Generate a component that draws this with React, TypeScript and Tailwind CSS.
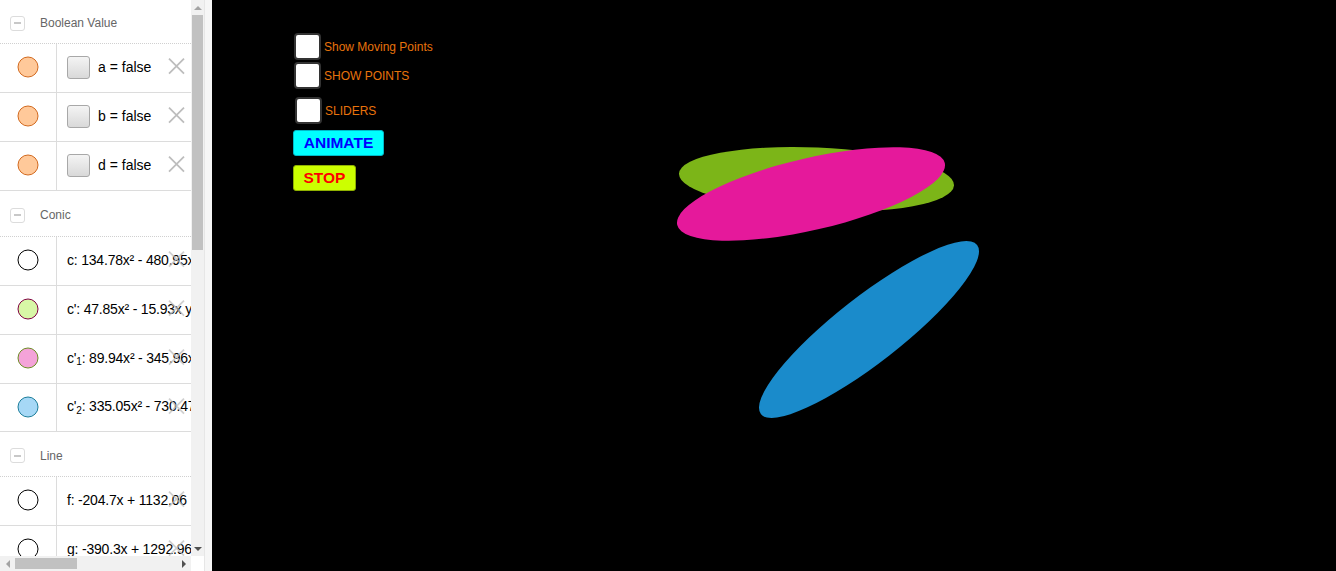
import React from "react";

const font = { fontFamily: '"Liberation Sans", Arial, sans-serif' };

function Collapse() {
  return (
    <div className="w-[15px] h-[15px] rounded-[3px] border border-[#dcdcdc] flex items-center justify-center">
      <div className="w-[7px] h-[2px] bg-[#c8c8c8]" />
    </div>
  );
}

function Header({ label, h }: { label: string; h: string }) {
  return (
    <div className={`flex items-center pt-[3px] border-b border-dotted border-[#d0d0d0] ${h}`}>
      <div className="w-[40px] pl-[10px] flex items-center">
        <Collapse />
      </div>
      <span className="text-[12px] text-[#666]">{label}</span>
    </div>
  );
}

function XIcon({ faint }: { faint?: boolean }) {
  return (
    <svg
      width="19"
      height="19"
      viewBox="0 0 19 19"
      className={`absolute left-[167px] top-1/2 -translate-y-[60%] ${faint ? "opacity-70" : ""}`}
    >
      <path d="M2 2 L17 17 M17 2 L2 17" stroke="#bdbdbd" strokeWidth="1.8" fill="none" />
    </svg>
  );
}

function Marble({ fill, stroke }: { fill: string; stroke: string }) {
  return (
    <svg width="22" height="22" viewBox="0 0 22 22">
      <circle cx="11" cy="11" r="10" fill={fill} stroke={stroke} strokeWidth="1" />
    </svg>
  );
}

function Row({
  fill,
  stroke,
  h = "h-[49px]",
  children,
  faint,
}: {
  fill: string;
  stroke: string;
  h?: string;
  children: React.ReactNode;
  faint?: boolean;
}) {
  return (
    <div className={`relative flex border-b border-[#dcdcdc] ${h}`}>
      <div className="w-[57px] shrink-0 border-r border-[#dcdcdc] flex items-center justify-center pr-[1px] pb-[2px]">
        <Marble fill={fill} stroke={stroke} />
      </div>
      <div className="flex-1 flex items-center pl-[10px] pb-[2px] whitespace-nowrap overflow-hidden text-[14px] text-black">
        {children}
      </div>
      <XIcon faint={faint} />
    </div>
  );
}

function BoolRow({ name }: { name: string }) {
  return (
    <Row fill="#ffc99a" stroke="#d2691e">
      <div className="w-[23px] h-[23px] rounded-[3px] border border-[#a8a8a8] bg-gradient-to-b from-[#f4f4f4] to-[#d9d9d9] mr-[8px]" />
      <span>{name} = false</span>
    </Row>
  );
}

function Prime({ base, sub }: { base: string; sub?: string }) {
  return (
    <span>
      {base}'{sub ? <sub className="text-[10px]">{sub}</sub> : null}
    </span>
  );
}

export default function App() {
  return (
    <div className="w-[1336px] h-[571px] flex overflow-hidden bg-white" style={font}>
      {/* Sidebar */}
      <div className="w-[204px] h-full flex flex-col shrink-0">
        <div className="flex flex-1 min-h-0">
          <div className="w-[191px] overflow-hidden">
            <Header label="Boolean Value" h="h-[44px]" />
            <BoolRow name="a" />
            <BoolRow name="b" />
            <BoolRow name="d" />
            <Header label="Conic" h="h-[46px]" />
            <Row fill="#ffffff" stroke="#000000" faint>
              <span className="tracking-[-0.2px]">c: 134.78x² - 480.95x + 53.73xy + 21.09y²</span>
            </Row>
            <Row fill="#d8f7a6" stroke="#800040" faint>
              <span className="tracking-[-0.2px]">
                <Prime base="c" />: 47.85x² - 15.93x y + 11.2y²
              </span>
            </Row>
            <Row fill="#f4a3d9" stroke="#6b8e23" faint>
              <span className="tracking-[-0.2px]">
                <Prime base="c" sub="1" />: 89.94x² - 345.96x + 12y²
              </span>
            </Row>
            <Row fill="#a6d8f6" stroke="#1b7d9a" h="h-[48px]" faint>
              <span className="tracking-[-0.2px]">
                <Prime base="c" sub="2" />: 335.05x² - 730.47x + 20y²
              </span>
            </Row>
            <Header label="Line" h="h-[45px]" />
            <Row fill="#ffffff" stroke="#000000" faint>
              <span className="tracking-[-0.2px]">f: -204.7x + 1132.06</span>
            </Row>
            <Row fill="#ffffff" stroke="#000000" faint>
              <span className="tracking-[-0.2px]">g: -390.3x + 1292.96</span>
            </Row>
          </div>
          {/* vertical scrollbar */}
          <div className="w-[13px] bg-[#f1f1f1] flex flex-col items-center">
            <div className="h-[15px] flex items-center justify-center">
              <div className="w-0 h-0 border-l-[4px] border-r-[4px] border-b-[4px] border-l-transparent border-r-transparent border-b-[#a3a3a3]" />
            </div>
            <div className="w-[11px] h-[235px] bg-[#c1c1c1]" />
            <div className="flex-1" />
            <div className="h-[15px] flex items-center justify-center">
              <div className="w-0 h-0 border-l-[4px] border-r-[4px] border-t-[4px] border-l-transparent border-r-transparent border-t-[#505050]" />
            </div>
          </div>
        </div>
        {/* horizontal scrollbar */}
        <div className="h-[15px] flex shrink-0">
          <div className="w-[191px] bg-[#f1f1f1] flex items-center">
            <div className="w-[15px] flex items-center justify-center">
              <div className="w-0 h-0 border-t-[4px] border-b-[4px] border-r-[4px] border-t-transparent border-b-transparent border-r-[#a3a3a3]" />
            </div>
            <div className="w-[62px] h-[11px] bg-[#c1c1c1]" />
            <div className="flex-1" />
            <div className="w-[15px] flex items-center justify-center">
              <div className="w-0 h-0 border-t-[4px] border-b-[4px] border-l-[4px] border-t-transparent border-b-transparent border-l-[#505050]" />
            </div>
          </div>
          <div className="flex-1 bg-white" />
        </div>
      </div>
      {/* divider */}
      <div className="w-[8px] h-full bg-[#f6f6f6] border-l border-[#e6e6e6] shrink-0" />
      {/* canvas */}
      <div className="flex-1 h-full bg-black relative overflow-hidden">
        <svg className="absolute inset-0" width="1124" height="571">
          <g transform="translate(-212 0)">
            <ellipse cx="816.5" cy="179.5" rx="137.6" ry="32" fill="#7cb518" transform="rotate(2.45 816.5 179.5)" />
            <ellipse cx="811" cy="194" rx="137.3" ry="36" fill="#e5199b" transform="rotate(-13 811 194)" />
            <ellipse cx="869" cy="329.5" rx="137.2" ry="33" fill="#1a8bcb" transform="rotate(-38 869 329.5)" />
          </g>
        </svg>
        <div className="absolute left-[82px] top-[33px] flex items-center">
          <div className="w-[27px] h-[27px] rounded-[4px] bg-white border-2 border-[#333]" />
          <span className="ml-[3px] text-[12px] text-[#e8730c]">Show Moving Points</span>
        </div>
        <div className="absolute left-[82px] top-[62px] flex items-center">
          <div className="w-[27px] h-[27px] rounded-[4px] bg-white border-2 border-[#333]" />
          <span className="ml-[3px] text-[12px] text-[#e8730c]">SHOW POINTS</span>
        </div>
        <div className="absolute left-[83px] top-[97px] flex items-center">
          <div className="w-[27px] h-[27px] rounded-[4px] bg-white border-2 border-[#333]" />
          <span className="ml-[3px] text-[12px] text-[#e8730c]">SLIDERS</span>
        </div>
        <div className="absolute left-[81px] top-[130px] w-[91px] h-[26px] rounded-[3px] bg-[#00ffff] border border-[#00b8c8] flex items-center justify-center">
          <span className="text-[15.5px] font-bold text-[#0000ff]">ANIMATE</span>
        </div>
        <div className="absolute left-[81px] top-[165px] w-[63px] h-[26px] rounded-[3px] bg-[#ccff00] border border-[#8fb000] flex items-center justify-center">
          <span className="text-[15.5px] font-bold text-[#ff0000]">STOP</span>
        </div>
      </div>
    </div>
  );
}
